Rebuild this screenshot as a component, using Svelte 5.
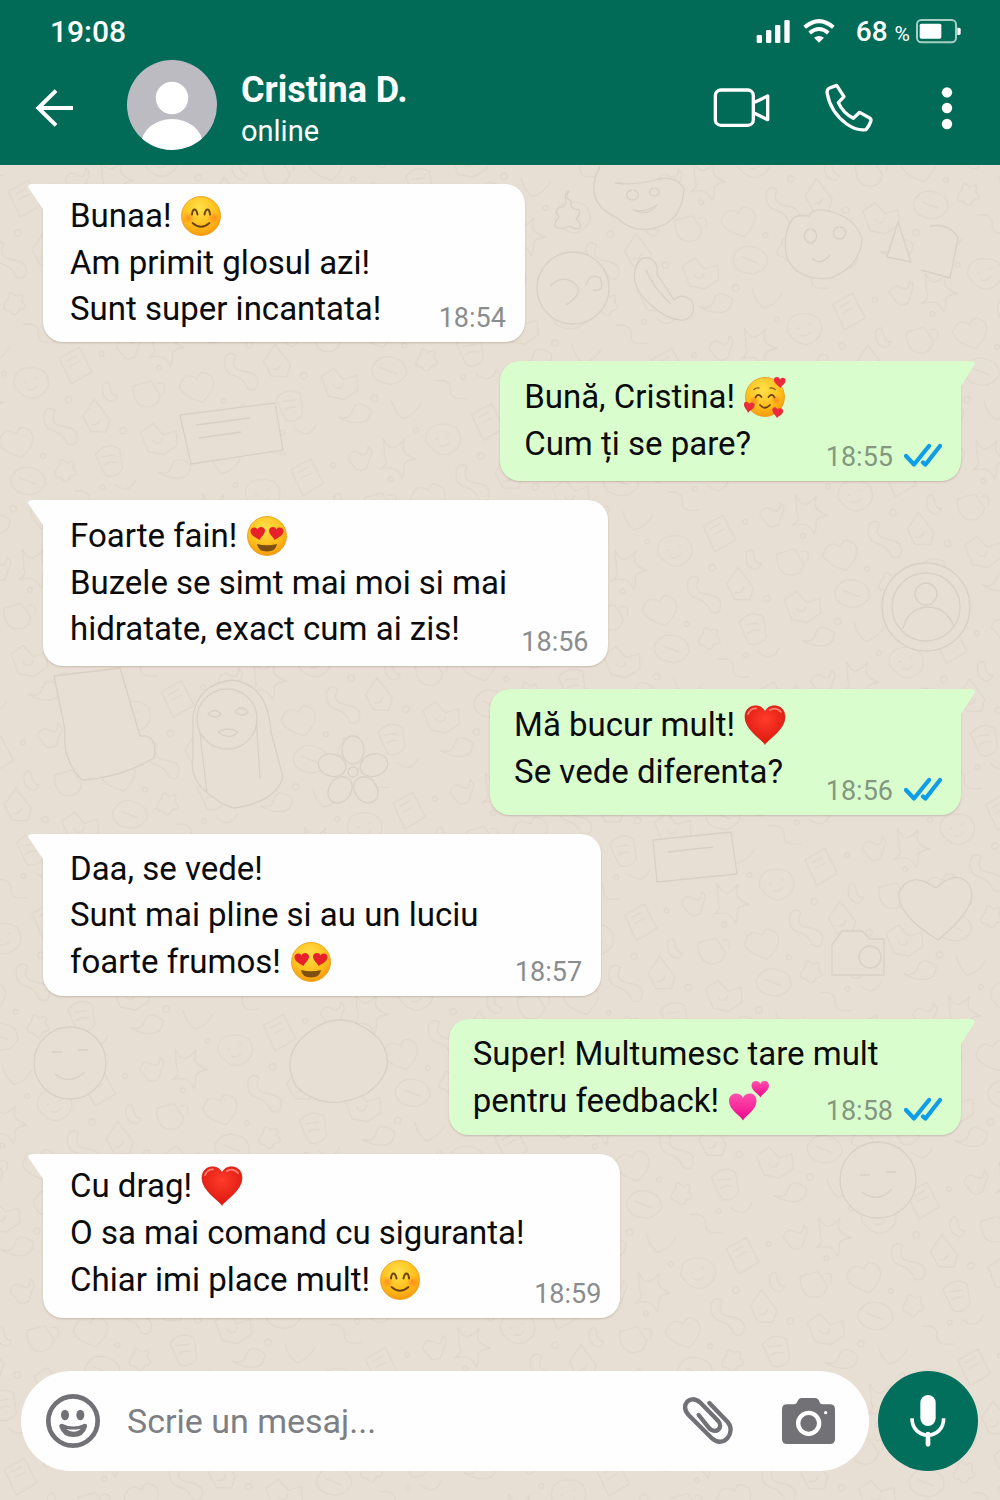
<script>
	const contact = { name: 'Cristina D.', status: 'online' };

	// width is the share of the thread that the bubble takes up
	const messages = [
		{
			from: 'them',
			time: '18:54',
			width: 52.5,
			pad: 'tight',
			lines: [
				{ text: 'Bunaa!', emoji: 'blush' },
				{ text: 'Am primit glosul azi!' },
				{ text: 'Sunt super incantata!' }
			]
		},
		{
			from: 'me',
			time: '18:55',
			width: 50.2,
			pad: 'roomy',
			lines: [{ text: 'Bună, Cristina!', emoji: 'loving' }, { text: 'Cum ți se pare?' }]
		},
		{
			from: 'them',
			time: '18:56',
			width: 61.5,
			pad: 'roomy',
			lines: [
				{ text: 'Foarte fain!', emoji: 'hearteyes' },
				{ text: 'Buzele se simt mai moi si mai' },
				{ text: 'hidratate, exact cum ai zis!' }
			]
		},
		{
			from: 'me',
			time: '18:56',
			width: 51.3,
			pad: 'loose',
			spaced: true,
			lines: [{ text: 'Mă bucur mult!', emoji: 'heart' }, { text: 'Se vede diferenta?' }]
		},
		{
			from: 'them',
			time: '18:57',
			width: 60.8,
			lines: [
				{ text: 'Daa, se vede!' },
				{ text: 'Sunt mai pline si au un luciu' },
				{ text: 'foarte frumos!', emoji: 'hearteyes' }
			]
		},
		{
			from: 'me',
			time: '18:58',
			width: 55.8,
			spaced: true,
			lines: [{ text: 'Super! Multumesc tare mult' }, { text: 'pentru feedback!', emoji: 'hearts' }]
		},
		{
			from: 'them',
			time: '18:59',
			width: 62.9,
			pad: 'tight roomy',
			lines: [
				{ text: 'Cu drag!', emoji: 'heart' },
				{ text: 'O sa mai comand cu siguranta!' },
				{ text: 'Chiar imi place mult!', emoji: 'blush' }
			]
		}
	];

	let draft = $state('');
</script>

{#snippet emojiIcon(name)}
	<svg class="emoji" viewBox="0 0 40 40" role="img" aria-label={name}>
		{#if name === 'heart'}
			<path d="M20 39.500 C18 35 0 25 0 12 C0 5 4.500 .8 10.500 .8 C15 .8 18.500 3 20 7 C21.500 3 25 .8 29.500 .8 C35.500 .8 40 5 40 12 C40 25 22 35 20 39.500Z" fill="url(#red)" stroke="#c9140b" stroke-width=".6" />
			<path d="M3 9 Q6 3 11 3.500 M25 5 Q31 1.500 36 7" fill="none" stroke="#ff9b8c" stroke-width="1.800" stroke-linecap="round" opacity=".8" />
		{:else if name === 'hearts'}
			<path d="M14 39.500 C12 35 0 29 0 20 C0 15 3.500 12.500 7 12.500 C10.500 12.500 13 14 14 17 C15 14 17.500 12.500 21 12.500 C24.500 12.500 27.500 15 27.500 20 C27.500 29 16 35 14 39.500Z" fill="url(#pink)" />
			<path d="M31.500 16.500 C30.500 13.500 22.500 10 22.500 4.500 C22.500 1.500 24.500 0 27 0 C29 0 30.800 1 31.300 3 C31.900 1 33.500 0 35.800 0 C38.300 0 40 2 40 4.500 C40 10 32.500 13.500 31.500 16.500Z" fill="url(#pink)" />
		{:else}
			<circle cx="20" cy="20" r="19.500" fill="url(#face)" stroke="#e89a12" stroke-width=".8" />
			{#if name === 'blush'}
				<circle cx="7.500" cy="22" r="6" fill="url(#cheek)" />
				<circle cx="32.500" cy="22" r="6" fill="url(#cheek)" />
				<path d="M11 18.500 Q11.500 13.500 13.500 13.500 Q15.500 13.500 16.500 18.500 M23.500 18.500 Q24.500 13.500 26.500 13.500 Q28.500 13.500 29 18.500" fill="none" stroke="#6b4310" stroke-width="2" stroke-linecap="round" />
				<path d="M11.500 27 Q20 34.500 28.500 27" fill="none" stroke="#6b4310" stroke-width="1.800" stroke-linecap="round" />
			{:else if name === 'hearteyes'}
				<path d="M12.500 24 C9 21.500 3.500 19.500 3.500 15 C3.500 11.500 8.500 10 10.500 13.500 C12 9.500 18 10.500 18 14.500 C18 18.500 13.500 21 12.500 24Z M27.500 24 C31 21.500 36.500 19.500 36.500 15 C36.500 11.500 31.500 10 29.500 13.500 C28 9.500 22 10.500 22 14.500 C22 18.500 26.500 21 27.500 24Z" fill="#e8202a" />
				<path d="M10 28 Q20 30.500 30 28 Q29 35.500 20 35.500 Q11 35.500 10 28Z" fill="#7d5012" />
			{:else}
				<circle cx="9" cy="24" r="5" fill="url(#cheek)" />
				<circle cx="31" cy="23" r="5" fill="url(#cheek)" />
				<path d="M9 12.500 Q11 10.500 14 11 M25 11 Q28 10.500 30 12.500" fill="none" stroke="#8a5a18" stroke-width="1.300" stroke-linecap="round" />
				<path d="M10.500 20.500 Q13 15.500 16.500 20 M23.500 20 Q27 15.500 29.500 20.500" fill="none" stroke="#6b4310" stroke-width="1.700" stroke-linecap="round" />
				<path d="M15 28 Q20 33.500 25 28" fill="none" stroke="#6b4310" stroke-width="1.800" stroke-linecap="round" />
				<path d="M35.500 11 C33 8 28.500 6 29 2 C29.500 -.5 34 -1 35 2.500 C37 -.5 41 1 40.500 4 C40 7.500 36.500 8.500 35.500 11Z" fill="#ea2b3a" />
				<path d="M3 36 C2.500 33 -1.500 30.500 -1 27 C-.5 24 3 24 4 27 C6 24 10.500 25.500 9.500 29 C8.500 32.500 4.500 33.500 3 36Z" fill="#ea2b3a" />
				<path d="M32 41 C30.500 38 26.500 35.500 27.500 32 C28.500 29 32 30 32.500 32.500 C34.500 30 39 31.500 38 35 C37 38.500 33.500 38.500 32 41Z" fill="#ea2b3a" />
			{/if}
		{/if}
	</svg>
{/snippet}

<svg class="defs" aria-hidden="true">
	<defs>
		<radialGradient id="face" cx=".45" cy=".3" r=".75">
			<stop offset="0" stop-color="#ffe14a" />
			<stop offset=".6" stop-color="#ffbe1c" />
			<stop offset="1" stop-color="#f5930a" />
		</radialGradient>
		<radialGradient id="cheek">
			<stop offset="0" stop-color="#ff6a1a" stop-opacity=".6" />
			<stop offset="1" stop-color="#ff6a1a" stop-opacity="0" />
		</radialGradient>
		<radialGradient id="red" cx=".5" cy=".35" r=".7">
			<stop offset="0" stop-color="#ff3b2b" />
			<stop offset="1" stop-color="#d9150c" />
		</radialGradient>
		<linearGradient id="pink" x1="0" y1="0" x2="0" y2="1">
			<stop offset="0" stop-color="#ff4fac" />
			<stop offset="1" stop-color="#f0088c" />
		</linearGradient>
	</defs>
</svg>

<div class="screen">
	<header>
		<div class="status">
			<span class="clock">19:08</span>
			<svg class="signal" viewBox="225 54 105 72" fill="#fff" aria-hidden="true">
				<rect x="227" y="102" width="16" height="24" rx="4" />
				<rect x="255" y="87" width="16" height="39" rx="4" />
				<rect x="282" y="72" width="16" height="54" rx="4" />
				<rect x="310" y="57" width="16" height="69" rx="4" />
			</svg>
			<svg class="wifi" viewBox="366 54 96 72" aria-hidden="true">
				<path d="M371 79 Q414 42 457 79 M386 96 Q414 72 442 96" fill="none" stroke="#fff" stroke-width="12" />
				<path d="M399 110 Q414 100 429 110 L414 125Z" fill="#fff" />
			</svg>
			<span class="charge">68 <small>%</small></span>
			<svg class="battery" viewBox="708 54 138 78" aria-hidden="true">
				<rect x="711" y="60" width="117" height="67" rx="13" fill="none" stroke="#a5cfc0" stroke-width="6" />
				<rect x="719" y="71" width="65" height="45" rx="5" fill="#fff" />
				<path d="M832 83 H837 Q842 83 842 88 V100 Q842 105 837 105 H832Z" fill="#fff" />
			</svg>
		</div>

		<div class="bar">
			<button class="icon" aria-label="Înapoi">
				<svg width="42" height="52" viewBox="102 247 126 156">
					<path d="M168 273 L115 325 L168 377 M115 325 H219" fill="none" stroke="#fff" stroke-width="12" />
				</svg>
			</button>
			<svg class="avatar" viewBox="0 0 90 90" aria-hidden="true">
				<clipPath id="round"><circle cx="45" cy="45" r="45" /></clipPath>
				<g clip-path="url(#round)">
					<rect width="90" height="90" fill="#bbbbc1" />
					<circle cx="45" cy="38" r="16.200" fill="#fff" />
					<ellipse cx="45" cy="85" rx="31" ry="26" fill="#fff" />
				</g>
			</svg>
			<div class="who">
				<h1>{contact.name}</h1>
				<p>{contact.status}</p>
			</div>
			<nav>
				<button class="icon" aria-label="Apel video">
					<svg width="60" height="52" viewBox="96 247 180 156">
						<g fill="none" stroke="#fff" stroke-width="10" stroke-linejoin="round">
							<rect x="109" y="271" width="114" height="106" rx="17" />
							<path d="M227 308 L266 289 V360 L227 341" />
						</g>
					</svg>
				</button>
				<button class="icon" aria-label="Apel vocal">
					<svg width="52" height="52" viewBox="430 247 156 156">
						<path d="M471 257 L493 291 L476 309 Q490 340 521 356 L540 338 L570 355 Q576 359 573 366 Q568 380 559 390 Q531 394 501 373 Q453 337 443 283 Q440 269 450 265 Z" fill="none" stroke="#fff" stroke-width="10" stroke-linejoin="round" />
					</svg>
				</button>
				<button class="icon" aria-label="Meniu">
					<svg width="40" height="52" viewBox="742 248 120 156" fill="#fff">
						<circle cx="802" cy="279" r="15.500" />
						<circle cx="802" cy="326" r="15.500" />
						<circle cx="802" cy="374" r="15.500" />
					</svg>
				</button>
			</nav>
		</div>
	</header>

	<main>
		<svg class="wallpaper" viewBox="0 165 1000 1335" preserveAspectRatio="xMidYMin slice" aria-hidden="true">
			<defs>
				<pattern id="doodles" width="236" height="218" patternUnits="userSpaceOnUse" patternTransform="rotate(-17) scale(.8)">
					<g fill="none" stroke="#d9cec1" stroke-width="1.400" opacity=".6">
						<path d="M12 22 q8 -12 16 -3 t13 -5 q6 8 -2 14 l-8 12 q-12 2 -14 -6z" />
						<path d="M62 10 q2 14 9 15 q9 -1 16 -6 q-8 12 -4 17 q5 8 11 11 q-12 -3 -17 2 q-3 12 -7 15 q-2 -12 -8 -15 q-8 -4 -16 -3 q13 -3 11 -12z" />
						<path d="M112 30 q4 -20 23 -16 t20 18 q0 16 -17 20 t-26 -22z M124 30 h4 M139 29 h4 M126 39 q8 6 14 -1" />
						<path d="M176 14 l28 -6 l6 34 l-29 7z M183 20 l15 -3 M185 28 l15 -3" />
						<path d="M218 62 q10 -7 8 5 t6 13 q-6 9 -13 2 t-1 -20z" />
						<path d="M18 74 q-7 24 8 30 q14 5 21 -9 l-6 -20z M47 80 q14 0 5 14" />
						<path d="M73 92 q12 -18 24 -3 q8 -13 18 2 q5 15 -20 28 q-22 -14 -22 -27z" />
						<path d="M138 74 q-8 16 4 24 t12 21 q9 8 14 -3 t-12 -19 t-4 -22 q-7 -9 -14 -1z" />
						<path d="M183 92 l20 -16 l11 30 l-9 13 l-18 -6z M190 105 q8 4 13 -4" />
						<path d="M10 132 l18 -6 l8 17 l17 0 l-4 18 l-20 6 l-17 -9z M22 145 a6 6 0 1 0 12 2" />
						<path d="M74 140 q13 -15 29 -5 t10 25 q-14 12 -29 3 t-10 -23z M84 142 l18 14" />
						<path d="M137 142 q4 -12 10 0 q13 -3 5 8 q7 12 -6 9 q-8 10 -12 -2 q-13 -5 3 -15z" />
						<path d="M184 142 q17 -12 31 2 l-4 25 q-11 10 -23 2z M190 147 l17 3 M190 158 q11 -3 16 2" />
						<path d="M16 186 q12 9 20 -3 t22 6 q-5 15 -18 12 t-24 -15z" />
						<path d="M86 184 q-2 14 6 27 q14 2 28 -11 M145 178 q20 4 15 17 t17 16 M196 184 q12 20 27 3" />
						<circle cx="56" cy="62" r="3" /><circle cx="172" cy="67" r="4" /><circle cx="121" cy="125" r="3" />
						<circle cx="66" cy="177" r="4" /><circle cx="180" cy="184" r="3" /><circle cx="226" cy="124" r="4" />
						<circle cx="104" cy="12" r="3" /><circle cx="228" cy="24" r="3" />
					</g>
				</pattern>
			</defs>
			<rect y="165" width="1000" height="1335" fill="url(#doodles)" />
			<g fill="#e8dfd4" stroke="#dacfc3" stroke-width="1.300" stroke-linejoin="round">
				<path d="M569 191 q-5 7 2 10 q-1 9 8 9 q2 4 -3 9 q6 5 4 9 q-6 2 -10 -2 q-8 4 -15 1 q-1 -4 4 -10 q-4 -6 -1 -9 q7 0 8 -7 q-3 -8 3 -10z" />
				<path d="M600 166 q-18 36 16 51 q18 18 42 10 q24 -7 26 -38 q-8 -14 -25 -10 q-24 7 -44 4 M633 210 q12 3 24 -5 q-8 12 -24 5z M632 190 a6 5 0 1 0 1 0 M654 188 a5 4 0 1 0 1 0" />
				<path d="M792 220 q-10 14 -5 38 q12 24 44 20 q30 -12 31 -40 q-7 -18 -24 -24 q-24 -9 -29 2 q-14 -2 -17 4z M812 258 q8 9 18 -3 M810 229 a6 7 0 1 0 1 0 M839 227 a6 6 0 1 0 1 0" />
				<path d="M635 270 q3 -14 14 -12 q10 4 8 16 l17 26 q8 -8 18 1 q5 15 -8 19 q-16 1 -33 -15 q-20 -17 -16 -35z M646 270 q8 19 25 34" />
				<circle cx="573" cy="288" r="36" /><path d="M550 286 q12 -12 24 -3 t-8 22 M586 285 q4 -13 14 -7 q6 14 -7 12" />
				<path d="M898 222 l13 40 l-24 -5z M930 226 q20 -3 28 12 l-8 40 l-29 -8" />
				<path d="M193 757 V716 Q198 684 232 680 Q268 684 271 732 L283 777 Q276 802 234 808 Q224 806 213 797 Q188 780 193 757z M207 793 L199 725 M260 778 L256 715" />
				<circle cx="227" cy="719" r="30" /><path d="M208 714 q7 -7 13 0 q-5 6 -13 0z M235 712 q5 -8 13 0 q-5 6 -13 0z M218 732 q10 -6 20 0 q-8 9 -20 0z" />
				<g transform="translate(353 772)">
					<ellipse cx="0" cy="-22" rx="11" ry="14" />
					<ellipse cx="0" cy="-22" rx="11" ry="14" transform="rotate(72)" />
					<ellipse cx="0" cy="-22" rx="11" ry="14" transform="rotate(144)" />
					<ellipse cx="0" cy="-22" rx="11" ry="14" transform="rotate(216)" />
					<ellipse cx="0" cy="-22" rx="11" ry="14" transform="rotate(288)" />
					<circle r="5" />
				</g>
				<path d="M54 676 l66 -8 l20 68 q18 -2 14 22 q-34 20 -72 22 q-20 -20 -17 -50z" />
				<circle cx="926" cy="607" r="44" /><circle cx="926" cy="607" r="34" /><path d="M903 629 q4 -20 24 -22 q20 0 27 20 M915 594 a11 11 0 1 1 22 0 a11 11 0 1 1 -22 0" />
				<path d="M180 415 l95 -12 l8 47 l-92 14z M196 425 l54 -7 M199 438 l42 -6" />
				<path d="M653 840 l78 -8 l6 42 l-80 8z M668 852 l45 -5 M832 945 l10 -14 h20 l8 8 h14 v36 h-52z" />
				<circle cx="870" cy="957" r="11" />
				<path d="M936 888 q22 -20 34 -2 q10 20 -32 54 q-42 -26 -39 -48 q12 -22 37 -4z" />
				<circle cx="70" cy="1063" r="36" /><path d="M52 1052 h10 M78 1050 h10 M55 1074 q14 12 30 -2" />
				<path d="M300 1040 q40 -40 80 0 q20 30 -14 54 q-42 20 -70 -8 q-14 -26 4 -46z" />
				<circle cx="878" cy="1180" r="38" /><path d="M860 1175 h10 M886 1172 h10 M862 1192 q16 12 30 -3" />
			</g>
		</svg>

		<ol class="thread">
			{#each messages as message}
				<li
					class="bubble {message.from} {message.pad ?? ''}"
					class:spaced={message.spaced}
					style="min-width: {message.width}%"
				>
					{#each message.lines as line, i}
						<div class="line">
							<p class:with-emoji={line.emoji}>
								{line.text}
								{#if line.emoji}{@render emojiIcon(line.emoji)}{/if}
							</p>
							{#if i === message.lines.length - 1}
								<div class="meta">
									<time>{message.time}</time>
									{#if message.from === 'me'}
										<svg class="ticks" viewBox="0 0 38 24" role="img" aria-label="Citit">
											<path d="M2 13 L10 21.500 L25 3 M19 19.500 L21.500 21.500 L36 3" fill="none" stroke="#0f9de8" stroke-width="4.200" stroke-linecap="round" stroke-linejoin="round" />
										</svg>
									{/if}
								</div>
							{/if}
						</div>
					{/each}
				</li>
			{/each}
		</ol>

		<form class="composer" onsubmit={(e) => e.preventDefault()}>
			<div class="field">
				<button type="button" aria-label="Emoji">
					<svg width="54" height="56" viewBox="140 99 162 168">
						<circle cx="221" cy="183" r="74" fill="none" stroke="#717176" stroke-width="14" />
						<g fill="#717176">
							<ellipse cx="197" cy="165" rx="12" ry="16" />
							<ellipse cx="243" cy="165" rx="12" ry="16" />
							<path d="M188 191 Q222 208 256 191 Q265 191 263 200 Q254 231 222 231 Q190 231 180 200 Q179 191 188 191Z" />
						</g>
						<path d="M201 207 Q222 211 244 206 Q236 215 222 215 Q209 215 201 207Z" fill="#fff" />
					</svg>
				</button>
				<input bind:value={draft} type="text" placeholder="Scrie un mesaj..." aria-label="Mesaj" />
				<button type="button" aria-label="Atașează">
					<svg width="54" height="52" viewBox="121 107 162 156">
						<path d="M206 131 L261 188 C287 218 250 268 215 238 L143 166 C117 138 148 103 178 129 L232 184 C250 205 226 226 206 207 L174 167" fill="none" stroke="#717176" stroke-width="13" stroke-linecap="round" />
					</svg>
				</button>
				<button type="button" aria-label="Cameră">
					<svg width="55" height="48" viewBox="422 110 165 144">
						<path d="M440 132 H462 Q469 131 471 124 Q475 113 484 113 H524 Q534 113 537 124 Q540 132 547 132 H569 Q584 132 584 147 V236 Q584 251 569 251 H440 Q425 251 425 236 V147 Q425 132 440 132Z" fill="#717176" />
						<circle cx="505" cy="189" r="31.500" fill="none" stroke="#fff" stroke-width="13" />
						<circle cx="556" cy="157" r="5" fill="#fff" />
					</svg>
				</button>
			</div>
			<button type="button" class="mic" aria-label="Mesaj vocal">
				<svg width="40" height="54" viewBox="804 108 120 162">
					<rect x="841" y="111" width="46" height="93" rx="23" fill="#fff" />
					<path d="M816 181 C816 248 911 248 911 181" fill="none" stroke="#fff" stroke-width="11" />
					<path d="M864 228 V259" stroke="#fff" stroke-width="14" stroke-linecap="round" />
				</svg>
			</button>
		</form>
	</main>
</div>

<style>
	:global(body) {
		background: #e8dfd4;
	}

	.screen {
		display: flex;
		flex-direction: column;
		min-height: 100vh;
		font-family: Roboto, 'Liberation Sans', sans-serif;
		color: #0b0b0c;
	}

	.defs {
		position: absolute;
		width: 0;
		height: 0;
	}

	svg {
		display: block;
		flex: none;
	}

	button {
		display: flex;
		align-items: center;
		justify-content: center;
		flex: none;
		padding: 0;
		border: none;
		background: none;
		cursor: pointer;
	}

	header {
		padding-bottom: 15px;
		background: #016b58;
		color: #fff;
	}

	.status {
		display: flex;
		align-items: center;
		box-sizing: border-box;
		height: 60px;
		padding: 2px 38px 0 50px;
	}

	.clock {
		margin-right: auto;
		font-size: 30px;
		font-weight: 500;
	}

	.signal {
		width: 35px;
		height: 24px;
	}

	.wifi {
		width: 32px;
		height: 24px;
		margin: 0 21px 0 12px;
	}

	.charge {
		font-size: 28px;
		font-weight: 500;
	}

	.charge small {
		font-size: 21px;
		font-weight: 400;
	}

	.battery {
		width: 46px;
		height: 26px;
		margin-left: 6px;
	}

	.bar {
		display: flex;
		align-items: center;
		padding: 0 33px 0 34px;
	}

	.icon {
		padding: 22px 0 16px;
	}

	.avatar {
		width: 90px;
		height: 90px;
		margin: 0 24px 0 51px;
	}

	.who {
		flex: 1;
		padding-top: 8px;
	}

	h1 {
		margin: 0;
		font-size: 36px;
		font-weight: 700;
		line-height: 44px;
	}

	.who p {
		margin: 0;
		font-size: 29px;
		line-height: 38px;
	}

	nav {
		display: flex;
		gap: 52px;
	}

	main {
		position: relative;
		display: flex;
		flex: 1;
		flex-direction: column;
		overflow: hidden;
	}

	.wallpaper {
		position: absolute;
		inset: 0;
		width: 100%;
		height: 100%;
	}

	.thread {
		position: relative;
		display: flex;
		flex: 1;
		flex-direction: column;
		margin: 0;
		padding: 0 39px 20px 43px;
		list-style: none;
	}

	.bubble {
		position: relative;
		box-sizing: border-box;
		margin-top: 19px;
		padding: 12px 19px 0 27px;
		border-radius: 20px;
		box-shadow: 0 1px 2px rgba(90, 70, 50, 0.25);
	}

	.bubble.spaced {
		margin-top: 23px;
	}

	.bubble::before {
		content: '';
		position: absolute;
		top: 0;
		width: 16px;
		height: 25px;
		background: inherit;
	}

	.them {
		align-self: flex-start;
		border-top-left-radius: 0;
		background: #fefefe;
	}

	.them::before {
		left: -15px;
		clip-path: path('M0 3 Q0 0 4 0 H16 V25 L15 25 Z');
	}

	.me {
		align-self: flex-end;
		padding-left: 24px;
		border-top-right-radius: 0;
		background: #dafdce;
	}

	.me::before {
		right: -14px;
		clip-path: path('M16 3 Q16 0 12 0 H0 V25 L2 25 Z');
	}

	.tight {
		padding-top: 8px;
	}

	.line {
		display: flex;
		justify-content: space-between;
		gap: 16px;
	}

	.line p {
		display: flex;
		align-items: center;
		gap: 10px;
		margin: 0;
		font-size: 33px;
		line-height: 46px;
		white-space: nowrap;
	}

	.line .with-emoji {
		line-height: 48px;
	}

	.line:last-child p {
		padding-bottom: 10px;
	}

	.roomy .line:last-child p {
		padding-bottom: 14px;
	}

	.loose .line:last-child p {
		padding-bottom: 20px;
	}

	.emoji {
		width: 40px;
		height: 40px;
		overflow: visible;
	}

	.meta {
		display: flex;
		align-items: center;
		align-self: flex-end;
		gap: 11px;
		margin-bottom: 9px;
		color: #8a8d8e;
		font-size: 27px;
		line-height: 30px;
	}

	.me .meta {
		color: #84977f;
	}

	.ticks {
		width: 38px;
		height: 24px;
		margin-bottom: 4px;
	}

	.composer {
		position: relative;
		display: flex;
		align-items: center;
		gap: 9px;
		padding: 0 22px 29px 21px;
	}

	.field {
		display: flex;
		flex: 1;
		align-items: center;
		gap: 27px;
		min-width: 0;
		height: 100px;
		padding: 0 33px 0 25px;
		box-sizing: border-box;
		border-radius: 50px;
		background: #fefefe;
	}

	.field button + button {
		margin-left: 19px;
	}

	input {
		flex: 1;
		min-width: 0;
		padding: 0;
		border: none;
		outline: none;
		background: none;
		color: inherit;
		font: inherit;
		font-size: 34px;
	}

	input::placeholder {
		color: #7d7f85;
		opacity: 1;
	}

	.mic {
		width: 100px;
		height: 100px;
		border-radius: 50%;
		background: #016f5b;
	}
</style>
